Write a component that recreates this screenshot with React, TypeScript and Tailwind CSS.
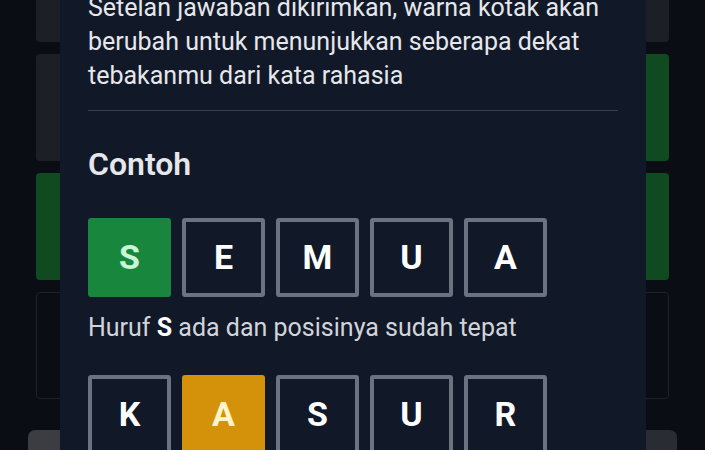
import React from "react";

type Tile = { ch: string; kind: "correct" | "present" | "empty" };

const rowOne: Tile[] = [
  { ch: "S", kind: "correct" },
  { ch: "E", kind: "empty" },
  { ch: "M", kind: "empty" },
  { ch: "U", kind: "empty" },
  { ch: "A", kind: "empty" },
];

const rowTwo: Tile[] = [
  { ch: "K", kind: "empty" },
  { ch: "A", kind: "present" },
  { ch: "S", kind: "empty" },
  { ch: "U", kind: "empty" },
  { ch: "R", kind: "empty" },
];

// board rows sitting behind the dimmed overlay
const board = [
  ["bg-[#1d1f27]", "bg-[#1d1f27]", "bg-[#1d1f27]", "bg-[#1d1f27]", "bg-[#1d1f27]"],
  ["bg-[#1d1f27]", "bg-[#1d1f27]", "bg-[#1d1f27]", "bg-[#1d1f27]", "bg-[#0f4a21]"],
  ["bg-[#0f4a21]", "bg-[#0f4a21]", "bg-[#0f4a21]", "bg-[#0f4a21]", "bg-[#0f4a21]"],
  ["border border-[#1c2230]", "border border-[#1c2230]", "border border-[#1c2230]", "border border-[#1c2230]", "border border-[#1c2230]"],
];

const LetterTile = ({ tile }: { tile: Tile }) => {
  const look =
    tile.kind === "correct"
      ? "bg-[#18873d] text-[#c9f7d6]"
      : tile.kind === "present"
      ? "bg-[#d4920b] text-[#fff4cc]"
      : "border-4 border-[#6b7280] text-white";
  return (
    <div
      className={`w-[83px] h-[79px] rounded-[3px] flex items-center justify-center text-[34px] font-bold ${look}`}
    >
      {tile.ch}
    </div>
  );
};

const App = () => {
  return (
    <div
      className="relative w-full h-[450px] overflow-hidden bg-[#0a0d13]"
      style={{ fontFamily: "Roboto, 'Liberation Sans', sans-serif" }}
    >
      {/* game board */}
      <div className="mt-[-65px] mx-[36px] flex flex-col gap-[12px]">
        {board.map((row, i) => (
          <div key={i} className="grid grid-cols-5 gap-[12px]">
            {row.map((c, j) => (
              <div key={j} className={`h-[107px] rounded-[4px] ${c}`} />
            ))}
          </div>
        ))}
      </div>
      <div className="mt-[31px] mx-[28px] flex gap-[6px]">
        <div className="h-[40px] w-[56px] rounded-[7px] bg-[#3b3d43]" />
        <div className="h-[40px] flex-1 rounded-[7px] bg-[#2a2c33]" />
        <div className="h-[40px] w-[56px] rounded-[7px] bg-[#2a2c33]" />
      </div>

      {/* how-to-play dialog */}
      <div className="absolute left-[60px] top-[-37px] bottom-0 w-[586px] bg-[#111827] px-[28px] pt-[28px]">
        <p className="text-[25px] leading-[34px] text-[#e5e7eb]">
          Setelan jawaban dikirimkan, warna kotak akan berubah untuk menunjukkan seberapa dekat tebakanmu dari kata
          rahasia
        </p>
        <div className="mt-[17px] h-px bg-[#374151]" />
        <h2 className="mt-[35px] text-[32px] leading-[36px] font-semibold text-[#e5e7eb]">Contoh</h2>
        <div className="mt-[36px] flex gap-[11px]">
          {rowOne.map((t, i) => (
            <LetterTile key={i} tile={t} />
          ))}
        </div>
        <p className="mt-[15px] text-[25px] leading-[32px] text-[#d1d5db]">
          Huruf <b className="font-bold text-white">S</b> ada dan posisinya sudah tepat
        </p>
        <div className="mt-[31px] flex gap-[11px]">
          {rowTwo.map((t, i) => (
            <LetterTile key={i} tile={t} />
          ))}
        </div>
      </div>
    </div>
  );
};

export default App;
